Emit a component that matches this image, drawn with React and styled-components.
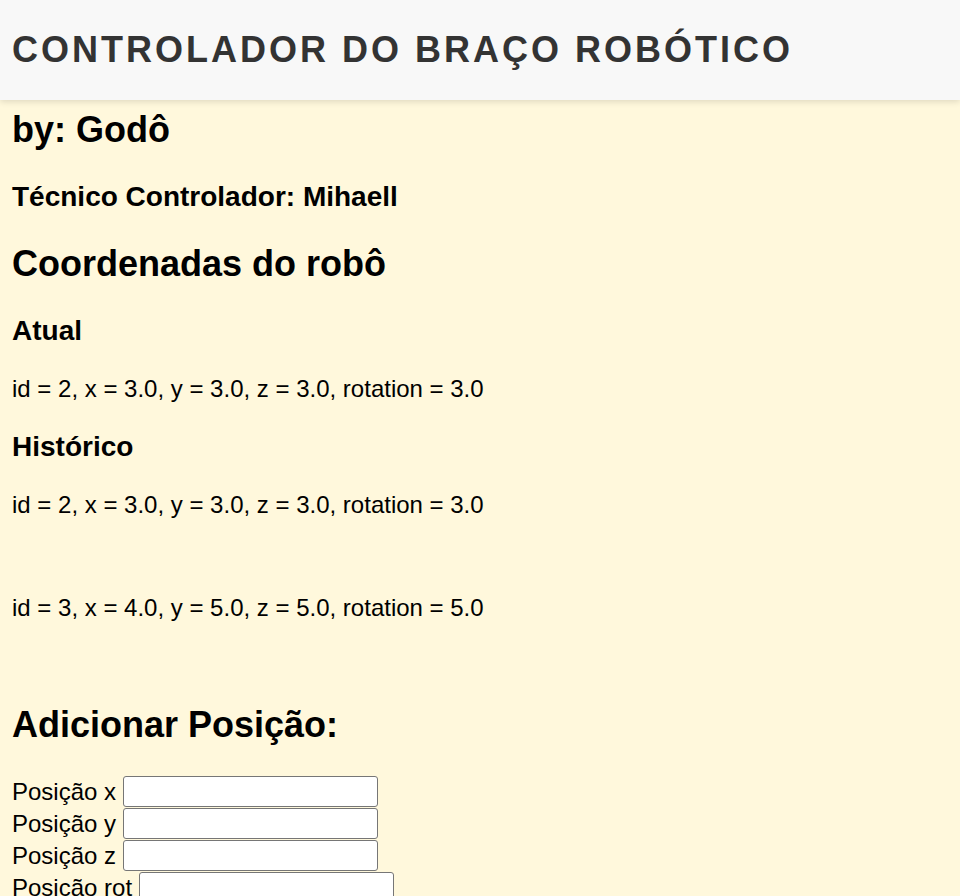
import styled, { createGlobalStyle } from "styled-components";

const GlobalStyle = createGlobalStyle`
  html, body {
    margin: 0;
    padding: 0;
    background: #fff8dc;
    font-family: "Liberation Sans", Arial, sans-serif;
    color: #000;
  }
`;

const Header = styled.header`
  height: 100px;
  background: #f8f8f8;
  display: flex;
  align-items: center;
  padding: 0 12px;
  box-shadow: 0 2px 6px rgba(0, 0, 0, 0.12);
  position: relative;
`;

const Title = styled.h1`
  margin: 0;
  font-size: 36px;
  font-weight: bold;
  letter-spacing: 3px;
  color: #333;
`;

const Main = styled.main`
  padding: 9px 12px 0;
`;

const Heading = styled.h2`
  font-size: 36px;
  font-weight: bold;
  margin: ${(p) => (p.$first ? "0 0 29.88px" : "29.88px 0")};
`;

const SubHeading = styled.h3`
  font-size: 28px;
  font-weight: bold;
  margin: 28px 0;
`;

const Coord = styled.p`
  font-size: 24px;
  margin: 24px 0;
`;

const Spacer = styled.div`
  height: 27.6px;
`;

const Form = styled.form`
  display: flex;
  flex-direction: column;
`;

const Row = styled.div`
  display: flex;
  align-items: center;
  gap: 7px;
  height: 32px;
  font-size: 24px;
`;

const Input = styled.input`
  width: 255px;
  height: 31px;
  box-sizing: border-box;
  border: 1.5px solid #767676;
  border-radius: 3px;
  background: #fff;
  padding: 1px 3px;
  font-size: 20px;
`;

const atual = { id: 2, x: "3.0", y: "3.0", z: "3.0", rotation: "3.0" };

const historico = [
  { id: 2, x: "3.0", y: "3.0", z: "3.0", rotation: "3.0" },
  { id: 3, x: "4.0", y: "5.0", z: "5.0", rotation: "5.0" },
];

const fmt = (c) =>
  `id = ${c.id}, x = ${c.x}, y = ${c.y}, z = ${c.z}, rotation = ${c.rotation}`;

const campos = ["Posição x", "Posição y", "Posição z", "Posição rot"];

export default function App() {
  return (
    <>
      <GlobalStyle />
      <Header>
        <Title>CONTROLADOR DO BRAÇO ROBÓTICO</Title>
      </Header>
      <Main>
        <Heading $first>by: Godô</Heading>
        <SubHeading>Técnico Controlador: Mihaell</SubHeading>
        <Heading>Coordenadas do robô</Heading>
        <SubHeading>Atual</SubHeading>
        <Coord>{fmt(atual)}</Coord>
        <SubHeading>Histórico</SubHeading>
        {historico.map((c) => (
          <div key={c.id}>
            <Coord>{fmt(c)}</Coord>
            <Spacer />
          </div>
        ))}
        <Heading>Adicionar Posição:</Heading>
        <Form>
          {campos.map((label) => (
            <Row key={label}>
              <span>{label}</span>
              <Input type="text" />
            </Row>
          ))}
        </Form>
      </Main>
    </>
  );
}
